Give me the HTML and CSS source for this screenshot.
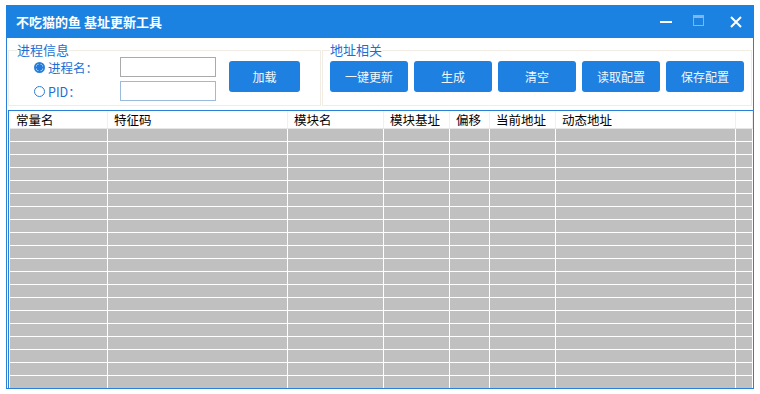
FILE: index.html
```html
<!DOCTYPE html>
<html lang="zh-CN">

<head>
    <meta charset="UTF-8">
    <title>不吃猫的鱼 基址更新工具</title>
    <link rel="stylesheet" href="styles.css">
</head>

<body>
    <div class="window">
        <div class="titlebar">
            <span class="title">不吃猫的鱼 基址更新工具</span>
            <div class="controls">
                <svg class="ctl ctl-min" width="12" height="12" viewBox="0 0 12 12"><rect x="0" y="5" width="12" height="2" fill="#fff"/></svg>
                <svg class="ctl ctl-max" width="11" height="11" viewBox="0 0 11 11"><rect x="0.5" y="0.5" width="10" height="10" fill="none" stroke="#7db7ee"/><rect x="1" y="1" width="9" height="2" fill="#7db7ee"/></svg>
                <svg class="ctl ctl-close" width="12" height="12" viewBox="0 0 12 12"><path d="M1 1 L11 11 M11 1 L1 11" stroke="#fff" stroke-width="2"/></svg>
            </div>
        </div>

        <div class="panel">
            <fieldset class="group group-process">
                <legend>进程信息</legend>
                <label class="radio"><span class="dot dot-on"></span>进程名：</label>
                <input class="field" type="text">
                <button class="btn btn-load">加载</button>
                <label class="radio"><span class="dot"></span>PID：</label>
                <input class="field field-active" type="text">
            </fieldset>
            <fieldset class="group group-addr">
                <legend>地址相关</legend>
                <button class="btn">一键更新</button>
                <button class="btn">生成</button>
                <button class="btn">清空</button>
                <button class="btn">读取配置</button>
                <button class="btn">保存配置</button>
            </fieldset>
        </div>

        <div class="grid">
            <div class="row head">
                <span>常量名</span><span>特征码</span><span>模块名</span><span>模块基址</span><span>偏移</span><span>当前地址</span><span>动态地址</span><span></span>
            </div>
            <div class="body">
                <div class="row"><span></span><span></span><span></span><span></span><span></span><span></span><span></span><span></span></div>
                <div class="row"><span></span><span></span><span></span><span></span><span></span><span></span><span></span><span></span></div>
                <div class="row"><span></span><span></span><span></span><span></span><span></span><span></span><span></span><span></span></div>
                <div class="row"><span></span><span></span><span></span><span></span><span></span><span></span><span></span><span></span></div>
                <div class="row"><span></span><span></span><span></span><span></span><span></span><span></span><span></span><span></span></div>
                <div class="row"><span></span><span></span><span></span><span></span><span></span><span></span><span></span><span></span></div>
                <div class="row"><span></span><span></span><span></span><span></span><span></span><span></span><span></span><span></span></div>
                <div class="row"><span></span><span></span><span></span><span></span><span></span><span></span><span></span><span></span></div>
                <div class="row"><span></span><span></span><span></span><span></span><span></span><span></span><span></span><span></span></div>
                <div class="row"><span></span><span></span><span></span><span></span><span></span><span></span><span></span><span></span></div>
                <div class="row"><span></span><span></span><span></span><span></span><span></span><span></span><span></span><span></span></div>
                <div class="row"><span></span><span></span><span></span><span></span><span></span><span></span><span></span><span></span></div>
                <div class="row"><span></span><span></span><span></span><span></span><span></span><span></span><span></span><span></span></div>
                <div class="row"><span></span><span></span><span></span><span></span><span></span><span></span><span></span><span></span></div>
                <div class="row"><span></span><span></span><span></span><span></span><span></span><span></span><span></span><span></span></div>
                <div class="row"><span></span><span></span><span></span><span></span><span></span><span></span><span></span><span></span></div>
                <div class="row"><span></span><span></span><span></span><span></span><span></span><span></span><span></span><span></span></div>
                <div class="row"><span></span><span></span><span></span><span></span><span></span><span></span><span></span><span></span></div>
                <div class="row"><span></span><span></span><span></span><span></span><span></span><span></span><span></span><span></span></div>
                <div class="row"><span></span><span></span><span></span><span></span><span></span><span></span><span></span><span></span></div>
            </div>
        </div>
    </div>
</body>

</html>
```

FILE: styles.css
```css
body {
    margin: 0;
    background: #fff;
    font-family: "Noto Sans CJK SC", "Noto Sans", sans-serif;
    font-size: 12px;
    color: #000;
}

.window {
    margin: 5px 0 0 6px;
    width: 748px;
    height: 384px;
    box-sizing: border-box;
    border: 1px solid #2a7fd6;
    border-top: none;
    display: flex;
    flex-direction: column;
    background: #fff;
}

.titlebar {
    height: 33px;
    flex: none;
    background-color: #1c82e2;
    color: #fff;
    display: flex;
    align-items: center;
    padding-left: 10px;
    margin: 0 -1px;
}

.title {
    font-size: 13px;
    font-weight: bold;
    line-height: 15px;
    margin-top: -1px;
}

.controls {
    margin-left: auto;
    display: flex;
    align-items: center;
    padding-right: 12px;
}

.ctl {
    display: block;
}

.ctl-min {
    margin-right: 21px;
}

.ctl-max {
    margin-right: 26px;
    margin-top: -3px;
}

/* zona de grupos */
.panel {
    display: flex;
    gap: 1px;
    padding: 5px 0 0 1px;
    flex: none;
}

.group {
    margin: 0;
    border: 1px solid #f2ede4;
    padding: 0 0 4px 8px;
    box-sizing: border-box;
    height: 63px;
}

.group legend {
    padding: 0;
    font-size: 13px;
    line-height: 14px;
    color: #1c6fd4;
}

.group-process {
    width: 313px;
    display: grid;
    grid-template-columns: 90px 96px 71px;
    grid-template-rows: 20px 20px;
    column-gap: 13px;
    row-gap: 4px;
}

.group-addr {
    width: 430px;
    padding-left: 7px;
    display: flex;
    gap: 6px;
    align-items: flex-start;
}

.radio {
    display: flex;
    align-items: center;
    padding-left: 17px;
    color: #1c6fd4;
    font-size: 12.5px;
}

.dot {
    width: 11px;
    height: 11px;
    box-sizing: border-box;
    border: 1px solid #2a7fd6;
    border-radius: 50%;
    margin-right: 3px;
    background: #fff;
}

.dot-on {
    border-width: 2px;
    background: radial-gradient(circle, #1c7ae0 0, #1c7ae0 3px, #fff 3.5px);
}

.field {
    width: 96px;
    height: 20px;
    box-sizing: border-box;
    border: 1px solid #aaa;
    margin: 0;
    padding: 0 3px;
    background: #fff;
}

.field-active {
    border-color: #9cbbdc;
}

.btn {
    width: 78px;
    height: 31px;
    margin-top: 4px;
    border: none;
    border-radius: 3px;
    background-color: #1e80e0;
    color: #f2f7fd;
    font-family: inherit;
    font-size: 12px;
    padding: 0;
}

.btn-load {
    width: 71px;
    grid-column: 3;
    grid-row: 1 / span 2;
    align-self: start;
}

/* tabla */
.grid {
    flex: 1;
    margin: 4px 0 0 1px;
    border-left: 1px solid #2a7fd6;
    border-top: 1px solid #2a7fd6;
    padding-left: 1px;
    overflow: hidden;
    display: flex;
    flex-direction: column;
}

.row {
    display: grid;
    grid-template-columns: 98px 180px 96px 66px 40px 66px 180px 1fr;
    height: 13px;
    box-sizing: border-box;
    border-bottom: 1px solid #fff;
}

.row span {
    background: #c0c0c0;
    border-right: 1px solid #fff;
}

.row.head {
    height: 18px;
    border-bottom: 1px solid #e6e6e6;
}

.row.head span {
    background: #fff;
    border-right: 1px solid #f0f0f0;
    padding-left: 6px;
    line-height: 17px;
    font-size: 12.5px;
    white-space: nowrap;
}

.body {
    flex: 1;
    overflow: hidden;
}
```
